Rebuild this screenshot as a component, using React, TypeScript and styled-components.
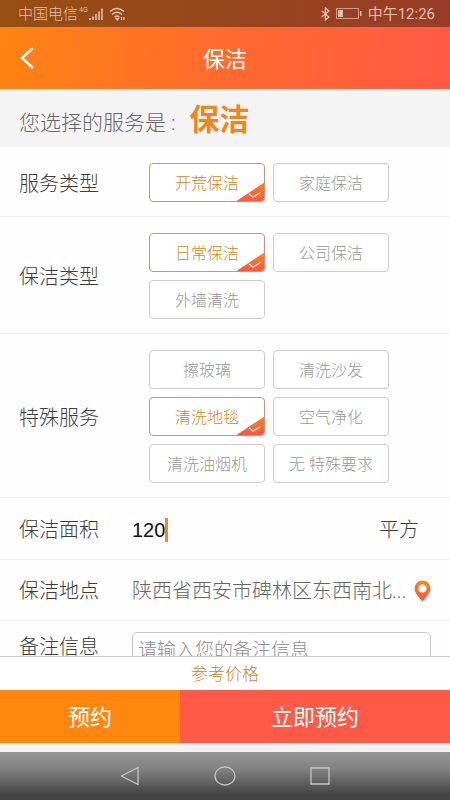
import React, { useState } from "react";
import styled, { createGlobalStyle, css } from "styled-components";

const GlobalStyle = createGlobalStyle`
  *, *::before, *::after { box-sizing: border-box; }
  body { margin: 0; background: #fff; }
  body, button, input, textarea {
    font-family: Roboto, "Noto Sans CJK SC", sans-serif;
    font-weight: 300;
  }
  button { cursor: pointer; }
`;

const Page = styled.div`
  display: flex;
  flex-direction: column;
  height: 100vh;
  overflow: hidden;
  background: #fefefe;
`;

const StatusBar = styled.div`
  flex: none;
  display: flex;
  justify-content: space-between;
  align-items: center;
  height: 27px;
  padding: 0 15px 0 18px;
  background: linear-gradient(90deg, #974f12, #983c28);
  color: #e2bfad;
  font-size: 15px;
  line-height: 20px;
`;

const StatusGroup = styled.div<{ $gap: number }>`
  display: flex;
  align-items: center;
  gap: ${(p) => p.$gap}px;
`;

const Network = styled.span`
  align-self: flex-start;
  font-size: 7px;
  line-height: 12px;
  font-weight: 400;
`;

const Time = styled.span`
  font-weight: 400;
`;

const Header = styled.header`
  flex: none;
  display: grid;
  grid-template-columns: 56px 1fr 56px;
  align-items: center;
  height: 62px;
  background: linear-gradient(100deg, #ff8412, #ff6a2e 50%, #ff5a45);
  color: #fff;
`;

const BackButton = styled.button`
  display: flex;
  align-items: center;
  height: 62px;
  padding: 0 0 0 19px;
  border: 0;
  background: none;
  color: inherit;
`;

const Title = styled.h1`
  margin: 0;
  padding-top: 3px;
  text-align: center;
  font-size: 22px;
  line-height: 32px;
  font-weight: 400;
`;

const Content = styled.main`
  flex: 1;
  min-height: 0;
  overflow-y: auto;
  scrollbar-width: none;
`;

const Banner = styled.div`
  display: flex;
  align-items: baseline;
  height: 58px;
  padding: 9px 19px 5px;
  background: #f5f4f4;
  color: #666;
  font-size: 21px;
  line-height: 44px;
`;

const Service = styled.strong`
  margin-left: 14px;
  color: #f08519;
  font-size: 30px;
  font-weight: 700;
`;

const rowBase = css`
  display: flex;
  margin: 0;
  padding: 0 19px;
  border: 0;
  border-bottom: 1px solid #f0f0f0;
`;

const ChoiceRow = styled.div`
  ${rowBase}
  align-items: center;
  padding-top: 16px;
  padding-bottom: 14px;
`;

const FieldRow = styled.div<{ $height: number }>`
  ${rowBase}
  align-items: center;
  height: ${(p) => p.$height}px;
  padding-top: 2px;
`;

const NoteRow = styled.div`
  ${rowBase}
  align-items: flex-start;
  padding-top: 11px;
  padding-bottom: 16px;
`;

const labelText = css`
  flex: none;
  color: #3c3c3c;
  font-size: 20px;
  line-height: 26px;
`;

const GroupLabel = styled.span`
  ${labelText}
  width: 130px;
  padding-top: 2px;
`;

const FieldLabel = styled.label`
  ${labelText}
  width: 113px;
`;

const NoteLabel = styled(FieldLabel)`
  padding-top: 2px;
`;

const Options = styled.div`
  display: grid;
  grid-template-columns: repeat(2, minmax(0, 116px));
  flex: 1;
  gap: 8px;
`;

const OptionButton = styled.button<{ $on: boolean }>`
  position: relative;
  height: 39px;
  padding: 2px 0 0;
  overflow: hidden;
  border: 1px solid ${(p) => (p.$on ? "#df8b77" : "#cdcdcd")};
  border-radius: 4px;
  background: #fff;
  color: ${(p) => (p.$on ? "#d98518" : "#999")};
  font-size: 16px;
  line-height: 24px;
  white-space: nowrap;
`;

const Corner = styled.svg`
  position: absolute;
  right: -1px;
  bottom: -1px;
`;

const Area = styled.div`
  display: flex;
  flex: 1;
  align-items: center;
  min-width: 0;
`;

const AreaInput = styled.input`
  field-sizing: content;
  min-width: 8px;
  padding: 0;
  border: 0;
  outline: 0;
  background: none;
  color: #111;
  font-family: "Liberation Sans", sans-serif;
  font-size: 20px;
  line-height: 26px;
  font-weight: 400;
`;

const Caret = styled.span`
  width: 3px;
  height: 24px;
  background: #ef8a24;
`;

const Unit = styled.span`
  padding-right: 12px;
  color: #3c3c3c;
  font-size: 20px;
  line-height: 26px;
`;

const PlaceButton = styled.button`
  display: flex;
  flex: 1;
  align-items: center;
  justify-content: space-between;
  min-width: 0;
  padding: 0;
  border: 0;
  background: none;
  color: #666;
  font-size: 20px;
  line-height: 26px;
  white-space: nowrap;
`;

const NoteInput = styled.textarea`
  flex: 1;
  min-width: 0;
  height: 90px;
  padding: 4px 5px;
  border: 1px solid #c8c8c8;
  border-radius: 5px;
  background: #fff;
  resize: none;
  color: #555;
  font-size: 19px;
  line-height: 28px;
  &::placeholder { color: #8c8c8c; opacity: 1; }
`;

const Price = styled.button`
  flex: none;
  height: 34px;
  padding: 0;
  border: 0;
  border-top: 1px solid #ccc;
  background: #fff;
  color: #d98518;
  font-size: 17px;
  line-height: 24px;
`;

const Actions = styled.div`
  flex: none;
  display: grid;
  grid-template-columns: 2fr 3fr;
  height: 62px;
  padding-bottom: 9px;
  background: #f3f1f1;
`;

const Action = styled.button<{ $color: string }>`
  padding: 3px 0 0;
  border: 0;
  background: ${(p) => p.$color};
  color: #fff;
  font-size: 22px;
  line-height: 32px;
  font-weight: 400;
`;

const NavBar = styled.nav`
  flex: none;
  display: flex;
  justify-content: center;
  gap: 74px;
  height: 48px;
  background: linear-gradient(#949494, #828282 35%, #424242 90%);
`;

const NavButton = styled.button`
  display: flex;
  align-items: center;
  padding: 0;
  border: 0;
  background: none;
  color: #c4c4c4;
`;

const groups = [
  { label: "服务类型", options: ["开荒保洁", "家庭保洁"], initial: "开荒保洁" },
  { label: "保洁类型", options: ["日常保洁", "公司保洁", "外墙清洗"], initial: "日常保洁" },
  {
    label: "特殊服务",
    options: ["擦玻璃", "清洗沙发", "清洗地毯", "空气净化", "清洗油烟机", "无 特殊要求"],
    initial: "清洗地毯",
  },
];

function Signal() {
  return (
    <svg width="15" height="14" viewBox="0 0 15 14" fill="none" stroke="currentColor" strokeWidth="1.6" aria-hidden="true">
      <path d="M1 11v2M4 9.500V13M7 7v6M10 4.500V13M13 1.500V13" />
    </svg>
  );
}

function Wifi() {
  return (
    <svg width="17" height="14" viewBox="0 0 17 14" fill="none" stroke="currentColor" strokeWidth="1.4" aria-hidden="true">
      <path d="M1 4.500q7-6 14 0M3 7.500q5-4.500 10 0M5.500 10q2.500-2 5 0" />
      <path d="m7 11.500 1.200 1.400 1.200-1.400z" fill="currentColor" />
      <path d="M12.500 10v3M15 10v3" strokeWidth="1.3" />
    </svg>
  );
}

function Bluetooth() {
  return (
    <svg width="9" height="14" viewBox="0 0 9 14" fill="none" stroke="currentColor" strokeWidth="1.3" aria-hidden="true">
      <path d="m.7 3.8 7.2 6.1-3.5 3V1l3.5 3L.7 10.1" />
    </svg>
  );
}

function Battery() {
  return (
    <svg width="26" height="11" viewBox="0 0 26 11" fill="none" stroke="currentColor" aria-hidden="true">
      <rect x=".5" y=".5" width="22" height="10" opacity=".75" />
      <path d="M2 2h5v7H2z" fill="currentColor" stroke="none" />
      <path d="M24.7 3v5" strokeWidth="1.5" />
    </svg>
  );
}

function ChoiceGroup({ label, options, initial }: (typeof groups)[number]) {
  const [selected, setSelected] = useState(initial);
  const gradient = `corner-${initial}`;
  return (
    <ChoiceRow role="group" aria-label={label}>
      <GroupLabel>{label}</GroupLabel>
      <Options>
        {options.map((name) => (
          <OptionButton
            key={name}
            type="button"
            $on={name === selected}
            aria-pressed={name === selected}
            onClick={() => setSelected(name)}
          >
            {name}
            {name === selected && (
              <Corner width="30" height="20" viewBox="0 0 30 20" aria-hidden="true">
                <defs>
                  <linearGradient id={gradient} x1="0" y1="0" x2="0" y2="1">
                    <stop offset="0" stopColor="#ff8314" />
                    <stop offset="1" stopColor="#fb5447" />
                  </linearGradient>
                </defs>
                <path d="M0 20 30 0v20z" fill={`url(#${gradient})`} />
                <path d="m14 12 4 3 7.500-4.500" fill="none" stroke="#ffe6d8" strokeWidth="1.3" />
              </Corner>
            )}
          </OptionButton>
        ))}
      </Options>
    </ChoiceRow>
  );
}

export default function App() {
  const [area, setArea] = useState("120");
  return (
    <Page>
      <GlobalStyle />
      <StatusBar>
        <StatusGroup $gap={5}>
          <StatusGroup $gap={1}>
            <span>中国电信</span>
            <Network>4G</Network>
            <Signal />
          </StatusGroup>
          <Wifi />
        </StatusGroup>
        <StatusGroup $gap={6}>
          <Bluetooth />
          <Battery />
          <Time>中午12:26</Time>
        </StatusGroup>
      </StatusBar>
      <Header>
        <BackButton type="button" aria-label="返回">
          <svg width="16" height="24" viewBox="0 0 16 24" fill="none" stroke="currentColor" strokeWidth="2.4" aria-hidden="true">
            <path d="M14 2 3 12l11 10" />
          </svg>
        </BackButton>
        <Title>保洁</Title>
      </Header>
      <Content>
        <Banner>
          您选择的服务是 :<Service>保洁</Service>
        </Banner>
        {groups.map((group) => (
          <ChoiceGroup key={group.label} {...group} />
        ))}
        <FieldRow $height={62}>
          <FieldLabel htmlFor="area">保洁面积</FieldLabel>
          <Area>
            <AreaInput id="area" inputMode="numeric" value={area} onChange={(e) => setArea(e.target.value)} />
            <Caret />
          </Area>
          <Unit>平方</Unit>
        </FieldRow>
        <FieldRow $height={61}>
          <FieldLabel htmlFor="place">保洁地点</FieldLabel>
          <PlaceButton id="place" type="button">
            陕西省西安市碑林区东西南北...
            <svg width="17" height="22" viewBox="0 0 17 22" aria-hidden="true">
              <defs>
                <linearGradient id="pin" x1="0" y1="0" x2="0" y2="1">
                  <stop offset="0" stopColor="#ee8c1c" />
                  <stop offset="1" stopColor="#fb534a" />
                </linearGradient>
              </defs>
              <path
                d="M8.5.5a8 8 0 0 0-8 8c0 4.5 4.7 9 8 13 3.300-4 8-8.500 8-13a8 8 0 0 0-8-8zm0 4a4 4 0 1 1 0 8 4 4 0 0 1 0-8z"
                fill="url(#pin)"
                fillRule="evenodd"
              />
            </svg>
          </PlaceButton>
        </FieldRow>
        <NoteRow>
          <NoteLabel htmlFor="note">备注信息</NoteLabel>
          <NoteInput id="note" placeholder="请输入您的备注信息" />
        </NoteRow>
      </Content>
      <Price type="button">参考价格</Price>
      <Actions>
        <Action type="button" $color="#ff8710">预约</Action>
        <Action type="button" $color="#ff5948">立即预约</Action>
      </Actions>
      <NavBar>
        <NavButton type="button" aria-label="返回">
          <svg width="20" height="20" viewBox="0 0 20 20" fill="none" stroke="currentColor" strokeWidth="1.3">
            <path d="M18 1.500v17L1.500 10z" />
          </svg>
        </NavButton>
        <NavButton type="button" aria-label="主页">
          <svg width="22" height="20" viewBox="0 0 22 20" fill="none" stroke="currentColor" strokeWidth="1.3">
            <ellipse cx="11" cy="10" rx="10" ry="9" />
          </svg>
        </NavButton>
        <NavButton type="button" aria-label="最近任务">
          <svg width="20" height="20" viewBox="0 0 20 20" fill="none" stroke="currentColor" strokeWidth="1.3">
            <path d="M1 2h18v16H1z" />
          </svg>
        </NavButton>
      </NavBar>
    </Page>
  );
}
